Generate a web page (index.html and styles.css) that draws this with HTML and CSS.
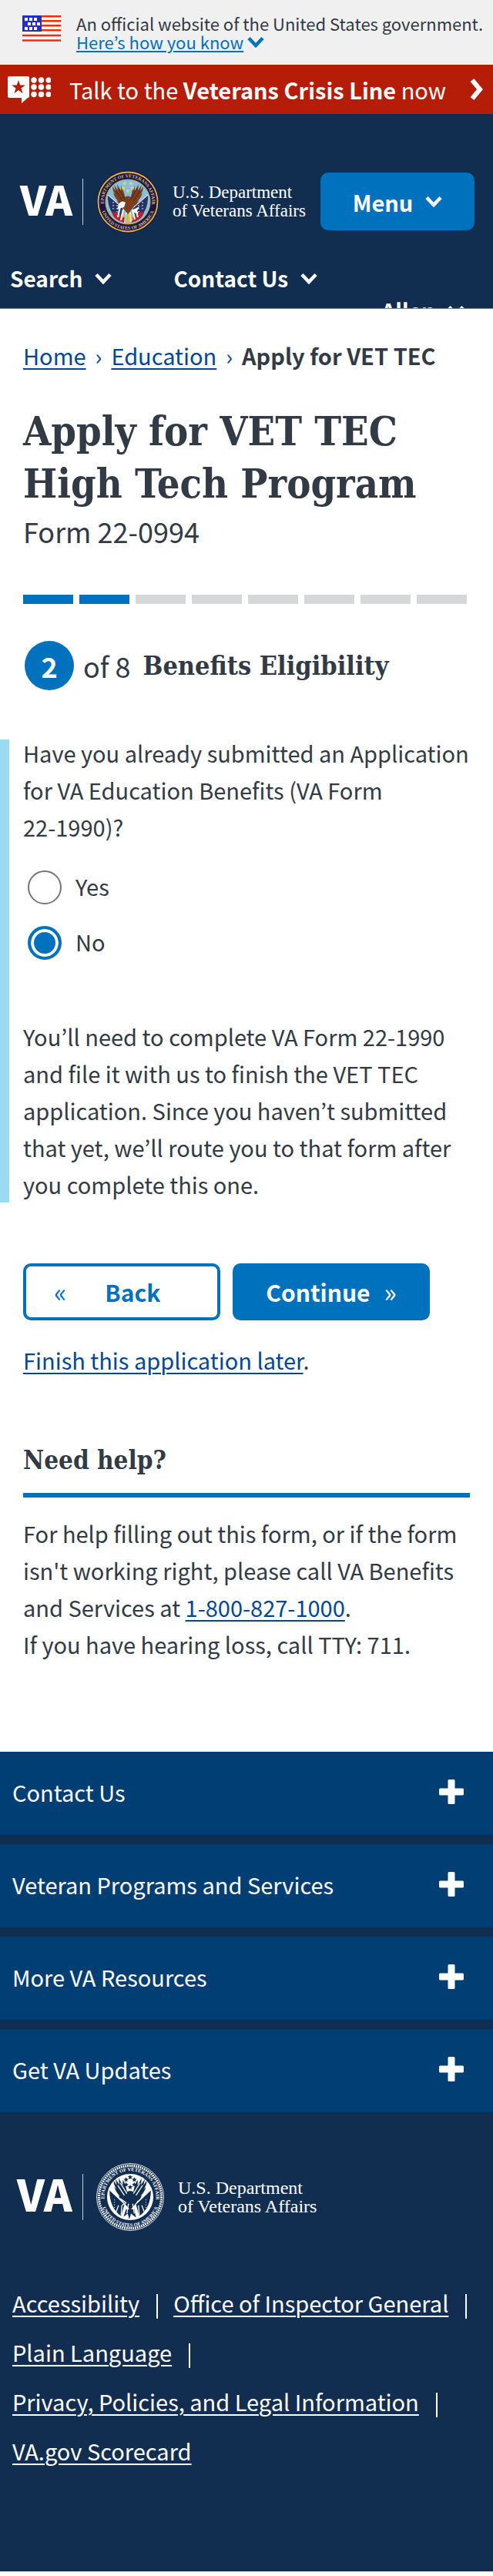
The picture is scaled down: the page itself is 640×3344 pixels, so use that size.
FILE: index.html
```html
<!DOCTYPE html>
<html lang="en">
<head>
<meta charset="utf-8">
<meta name="viewport" content="width=device-width, initial-scale=1">
<title>Apply for VET TEC | Veterans Affairs</title>
<link rel="stylesheet" href="styles.css">
</head>
<body>
<svg class="defs" width="0" height="0" aria-hidden="true">
  <defs>
    <symbol id="chevron" viewBox="0 0 22 15"><path d="M2 2.500l9 9.500 9-9.500" fill="none" stroke="currentColor" stroke-width="4.500"/></symbol>
    <symbol id="plus" viewBox="0 0 32 32"><path d="M13 0h6q1.500 0 1.500 1.500v10h10q1.500 0 1.500 1.500v6q0 1.500-1.500 1.500h-10v10q0 1.500-1.500 1.500h-6q-1.500 0-1.500-1.500v-10h-10q-1.500 0-1.500-1.500v-6q0-1.500 1.500-1.500h10v-10q0-1.500 1.500-1.500z" fill="currentColor"/></symbol>
    <path id="arc-top" d="M-31 4A31.300 31.300 0 1 1 31 4"/>
    <path id="arc-bottom" d="M-35.500 6A36 36 0 0 0 35.500 6"/>
    <path id="star" d="M0-3l.9 1.900 2 .2-1.500 1.400.4 2.100L0 1.600-1.800 2.600l.4-2.100L-2.900-.9l2-.2z"/>
    <path id="wing" d="M-3 7C-10 6-13 2-14-2l2 1c-4-3-6-7-7-11l3 3c-3-4-4-7-4-11l4 6-2-8 5 7-1-8 5 9 0-7c3 5 4 9 5 14z"/>
  </defs>
</svg>

<div class="gov-banner">
  <svg class="flag" viewBox="0 0 50 34" aria-hidden="true">
    <path fill="#fff" d="M0 0h50v34H0z"/>
    <path d="M0 1.200h50M0 7.200h50M0 13.200h50M0 19.200h50M0 26h50M0 32.500h50" stroke="#f22b08" stroke-width="2.600"/>
    <path fill="#2130bd" d="M0 0h25v21H0z"/>
    <path d="M3 5h18M7 11h18M3 17h18" stroke="#fff" stroke-width="4" stroke-dasharray="4 2"/>
  </svg>
  <div>
    <div>An official website of the United States government.</div>
    <button class="banner-link" type="button"><span>Here’s how you know</span><svg class="chev" aria-hidden="true"><use href="#chevron"/></svg></button>
  </div>
</div>

<a class="crisis" href="#crisis">
  <svg class="crisis-icon" viewBox="0 0 56 35" aria-hidden="true">
    <path fill="#fff" d="M2 0h24q2 0 2 2v24q0 2-2 2l-8 7v-7H2q-2 0-2-2V2q0-2 2-2z"/>
    <path fill="#b51d09" d="M14 5l2.200 6.500h6.800l-5.500 4 2.100 6.700L14 18.100l-5.600 4.100 2.100-6.700-5.500-4h6.800z"/>
    <g fill="#fff"><circle cx="34" cy="5" r="3.700"/><circle cx="43.500" cy="5" r="3.700"/><circle cx="53" cy="5" r="3.500"/><circle cx="34" cy="14" r="3.700"/><circle cx="43.500" cy="14" r="3.700"/><circle cx="53" cy="14" r="3.500"/><circle cx="34" cy="23.500" r="3.700"/><circle cx="43.500" cy="23.500" r="3.700"/><circle cx="53" cy="23.500" r="3.500"/></g>
  </svg>
  <span class="crisis-text">Talk to the <strong>Veterans Crisis Line</strong> now</span>
  <svg class="crisis-arrow" viewBox="0 0 18 28" aria-hidden="true"><path d="M3 2l10 12L3 26" fill="none" stroke="#fff" stroke-width="6"/></svg>
</a>

<header class="header">
  <div class="header-row">
    <a class="logo" href="#home">
      <span class="logo-va">VA</span>
      <span class="logo-rule"></span>
      <svg class="seal" viewBox="-41 -41 82 82" aria-hidden="true">
        <circle r="40.500" fill="#1d1748"/>
        <circle r="38.500" fill="none" stroke="#e5b53c" stroke-width="1.800"/>
        <circle r="29" fill="#84bfdc" stroke="#d9ae45"/>
        <g class="seal-text" fill="#d8bd78"><text><textPath href="#arc-top" startOffset="50%" text-anchor="middle">DEPARTMENT OF VETERANS AFFAIRS</textPath></text><text><textPath href="#arc-bottom" startOffset="50%" text-anchor="middle">UNITED STATES OF AMERICA</textPath></text></g>
        <path fill="#253466" d="M-26-9l20 17-5 16Q-27 13-26-9zM26-9L6 8l5 16Q27 13 26-9z"/>
        <path d="M-26-9l22 19M26-9L4 10" stroke="#d9dfe8" stroke-width="1.200"/>
        <path d="M-19 0v10M-14 4v11M19 0v10M14 4v11" stroke="#cbd4e6" stroke-dasharray="1.500 2.500" stroke-width="1.500"/>
        <path fill="#b52235" d="M-21 14q7-3 10 2 5 6 9 4l-3 7Q-18 24-21 14zM21 14q-7-3-10 2-5 6-9 4l3 7Q18 24 21 14z"/>
        <path d="M-10 6l-3 14M-6 10l-3 14M10 10l3 10M6 10l3 13M-2 14l-2 13M3 14l1 12" stroke="#f4efec" stroke-width="2.200"/>
        <g fill="#7c3f1d"><use href="#wing"/><use href="#wing" transform="scale(-1 1)"/><path d="M-6-5Q0-10 6-5l2 11-8 10-8-10z"/></g>
        <path d="M-16-15l9 14M-12-18l8 15M16-15L7-1M12-18L4-3" stroke="#4e2414"/>
        <path fill="#fff" d="M-12 3q4-6 9-2l-2 6-5 1-4 2zM7 10l8-4-3 6 2 3-7-1z"/>
        <path d="M-2 16l-2 10M1 16v11M4 16l2 8" stroke="#efbd27" stroke-width="2"/>
        <g fill="#f4d44c"><use href="#star" x="-4" y="-24"/><use href="#star" x="4" y="-24"/><use href="#star" x="-6" y="-18"/><use href="#star" x="6" y="-18"/><use href="#star" y="-14"/></g>
      </svg>
      <span class="logo-name">U.S. Department<br>of Veterans Affairs</span>
    </a>
    <button class="menu" type="button">Menu <svg class="chev" aria-hidden="true"><use href="#chevron"/></svg></button>
  </div>
  <nav class="tools" aria-label="Tools">
    <button class="tool" type="button">Search <svg class="chev" aria-hidden="true"><use href="#chevron"/></svg></button>
    <button class="tool" type="button">Contact Us <svg class="chev" aria-hidden="true"><use href="#chevron"/></svg></button>
    <button class="tool tool-user" type="button">Allen <svg class="chev" aria-hidden="true"><use href="#chevron"/></svg></button>
  </nav>
</header>

<main class="main">
  <nav class="crumbs" aria-label="Breadcrumb">
    <a href="#home">Home</a><span class="sep">›</span><a href="#education">Education</a><span class="sep">›</span><strong>Apply for VET TEC</strong>
  </nav>
  <h1>Apply for VET TEC High Tech Program</h1>
  <p class="form-no">Form 22-0994</p>
  <div class="progress" role="img" aria-label="Step 2 of 8">
    <span class="seg done"></span><span class="seg done"></span><span class="seg"></span><span class="seg"></span><span class="seg"></span><span class="seg"></span><span class="seg"></span><span class="seg"></span>
  </div>
  <div class="step">
    <span class="step-no">2</span><span class="step-of">of 8</span><h2>Benefits Eligibility</h2>
  </div>

  <form class="form">
    <fieldset class="question">
      <legend>Have you already submitted an Application for VA Education Benefits (VA Form <span class="keep">22-1990)?</span></legend>
      <div class="options">
        <div class="option"><input type="radio" name="applied" id="applied-yes"><label for="applied-yes">Yes</label></div>
        <div class="option"><input type="radio" name="applied" id="applied-no" checked><label for="applied-no">No</label></div>
      </div>
      <p class="note">You’ll need to complete VA Form <span class="keep">22-1990</span> and file it with us to finish the VET TEC application. Since you haven’t submitted that yet, we’ll route you to that form after you complete this one.</p>
    </fieldset>
    <div class="actions">
      <button class="btn back" type="button"><span class="angle">«</span><span class="back-label">Back</span></button>
      <button class="btn next" type="submit"><span>Continue</span><span class="angle">»</span></button>
    </div>
  </form>
  <p class="later"><a href="#later">Finish this application later</a>.</p>

  <section class="help">
    <h2>Need help?</h2>
    <p>For help filling out this form, or if the form isn't working right, please call VA Benefits and Services at <a href="tel:18008271000">1-800-827-1000</a>.<br>If you have hearing loss, call TTY: 711.</p>
  </section>
</main>

<footer class="footer">
  <div class="accordion">
    <button type="button">Contact Us<svg class="plus" aria-hidden="true"><use href="#plus"/></svg></button>
    <button type="button">Veteran Programs and Services<svg class="plus" aria-hidden="true"><use href="#plus"/></svg></button>
    <button type="button">More VA Resources<svg class="plus" aria-hidden="true"><use href="#plus"/></svg></button>
    <button type="button">Get VA Updates<svg class="plus" aria-hidden="true"><use href="#plus"/></svg></button>
  </div>
  <a class="logo logo-footer" href="#home">
    <span class="logo-va">VA</span>
    <span class="logo-rule"></span>
    <svg class="seal" viewBox="-41 -41 82 82" aria-hidden="true">
      <circle r="40.500" fill="none" stroke="#fff" stroke-width=".8"/>
      <circle r="37.800" fill="none" stroke="#fff" stroke-width="3" stroke-dasharray="1.600 1"/>
      <circle r="28" fill="#fff"/>
      <g class="seal-text" fill="#fff"><text><textPath href="#arc-top" startOffset="50%" text-anchor="middle">DEPARTMENT OF VETERANS AFFAIRS</textPath></text><text><textPath href="#arc-bottom" startOffset="50%" text-anchor="middle">UNITED STATES OF AMERICA</textPath></text></g>
      <g fill="#112e51"><path d="M-25-8l18 17-4 14Q-25 13-25-8zM25-8L7 9l4 14Q25 13 25-8z"/><use href="#wing"/><use href="#wing" transform="scale(-1 1)"/><path d="M-6-5Q0-10 6-5l2 11-8 10-8-10z"/><path d="M-5 15l-3 9 5-4 2 7 2-7 6 5-2-10z"/>
      <use href="#star" x="-5" y="-21"/><use href="#star" y="-24"/><use href="#star" x="5" y="-21"/><use href="#star" x="-5" y="-15"/><use href="#star" x="5" y="-15"/><use href="#star" y="-12"/></g>
      <path d="M-15-14l8 12M-12-17l8 13M15-14L7-2M12-17L4-4M-12 2l7 5-5 3M-14 10l-3 8M-10 10l-1 12M14 10l3 8M10 10l1 12M-2 8l-2 12M3 8l2 12" stroke="#fff" fill="none" stroke-width="1.200"/>
      <path d="M-19 3v10M19 3v10" stroke="#fff" stroke-dasharray="1 2"/>
    </svg>
    <span class="logo-name">U.S. Department<br>of Veterans Affairs</span>
  </a>
  <ul class="links">
    <li><a href="#accessibility">Accessibility</a></li>
    <li><a href="#oig">Office of Inspector General</a></li>
    <li><a href="#plain">Plain Language</a></li>
    <li><a href="#privacy">Privacy, Policies, and Legal Information</a></li>
    <li><a href="#scorecard">VA.gov Scorecard</a></li>
  </ul>
</footer>
</body>
</html>
```

FILE: styles.css
```css
* { box-sizing: border-box; }

body {
  margin: 0;
  padding-bottom: 6px;
  background: #fff;
  color: #323a45;
  font-family: "Noto Sans CJK KR", "Noto Sans", sans-serif;
  font-size: 29px;
  line-height: 48px;
}

button {
  border: 0;
  padding: 0;
  background: none;
  color: inherit;
  font: inherit;
  cursor: pointer;
}

h1, h2, p, ul, fieldset { margin: 0; padding: 0; }
h1, h2 { font-family: "DejaVu Serif Condensed", "DejaVu Serif", serif; font-weight: 700; }
a { color: #004795; text-decoration-thickness: 2px; text-underline-offset: 4px; }

.defs { position: absolute; }
.chev { width: 22px; height: 15px; flex: none; }
.keep { white-space: nowrap; }

/* Government banner */
.gov-banner {
  display: flex;
  gap: 20px;
  padding: 18px 8px 18px 29px;
  background: #f0f0f0;
  font-size: 22px;
  line-height: 24px;
}
.flag { width: 50px; height: 34px; margin-top: 2px; flex: none; }
.banner-link { display: flex; align-items: center; gap: 5px; color: #0071bc; }
.banner-link span { text-decoration: underline; text-decoration-thickness: 2px; text-underline-offset: 2px; }

/* Crisis line */
.crisis {
  display: flex;
  align-items: center;
  height: 64px;
  padding: 0 12px 0 10px;
  background: #b51d09;
  color: #fff;
  line-height: 40px;
  text-decoration: none;
}
.crisis-icon { width: 56px; height: 35px; flex: none; }
.crisis-text { flex: 1; margin-left: 24px; }
.crisis-arrow { width: 18px; height: 28px; flex: none; }

/* Header */
.header {
  padding-top: 76px;
  border-bottom: 1px solid #6f7f95;
  background: #112e51;
  color: #fff;
}
.header-row {
  display: flex;
  align-items: center;
  justify-content: space-between;
  padding: 0 24px 0 26px;
}
.logo { display: flex; align-items: center; color: #fff; text-decoration: none; }
.logo-va { width: 66px; padding-bottom: 10px; font-size: 53px; font-weight: 900; line-height: 60px; }
.logo-rule { width: 1px; height: 60px; margin: 0 17px 0 15px; background: #c5ccd6; }
.seal { width: 82px; height: 82px; margin: -4px 0; flex: none; }
.seal-text { font-family: "Liberation Serif", serif; font-size: 6px; font-weight: 700; }
.logo-name {
  margin-left: 17px;
  font-family: "Liberation Serif", serif;
  font-size: 23px;
  line-height: 24px;
  white-space: nowrap;
}
.menu {
  display: flex;
  align-items: center;
  justify-content: center;
  gap: 16px;
  width: 200px;
  height: 75px;
  border-radius: 10px;
  background: #0071bc;
  font-weight: 700;
}
.tools {
  display: flex;
  flex-wrap: wrap;
  column-gap: 80px;
  height: 60px;
  margin-top: 41px;
  padding: 0 37px 0 13px;
  overflow: hidden;
  font-size: 28px;
  line-height: 42px;
}
.tool { display: flex; align-items: center; gap: 16px; font-weight: 700; }
.tool-user { width: 100%; justify-content: flex-end; }

/* Page body */
.main { padding: 36px 30px 0; }
.sep { margin: 0 12px; color: #004795; }
h1 { margin-top: 41px; font-size: 52px; line-height: 68px; }
.form-no { margin-top: 3px; font-size: 36px; }
.progress {
  display: grid;
  grid-template-columns: repeat(8, 1fr);
  gap: 8px;
  margin-top: 59px;
  padding-right: 4px;
}
.seg { height: 12px; background: #d6d7d9; }
.done { background: #0071bc; }
.step { display: flex; align-items: center; margin: 48px 0 0 2px; font-size: 36px; }
.step-no {
  width: 64px;
  height: 64px;
  border-radius: 50%;
  background: #0071bc;
  color: #fff;
  font-weight: 700;
  line-height: 64px;
  text-align: center;
}
.step-of { margin: 0 16px 0 12px; }
h2 { font-size: 34px; line-height: 48px; }

.question {
  min-width: 0;
  margin: 64px -30px 0;
  padding: 0 30px 0 18px;
  border: 0;
  border-left: 12px solid #9bdaf1;
}
legend { float: left; width: 100%; margin-top: -7px; padding: 0; }
.options { display: grid; gap: 24px; clear: both; padding: 31px 0 0 6px; }
.option { display: flex; align-items: center; gap: 18px; }
.option input {
  appearance: none;
  width: 44px;
  height: 44px;
  margin: 0;
  border: 2px solid #757575;
  border-radius: 50%;
}
.option input:checked { border: 4px solid #0071bc; background: #0071bc; box-shadow: inset 0 0 0 4px #fff; }
.option label { padding-bottom: 4px; line-height: 44px; }
.note { margin-top: 73px; }

.actions { display: flex; gap: 16px; margin-top: 79px; }
.btn {
  display: flex;
  align-items: center;
  width: 256px;
  height: 74px;
  border-radius: 10px;
  font-size: 30px;
  font-weight: 700;
}
.back { padding-left: 36px; border: 4px solid #0071bc; color: #0071bc; }
.back-label { margin-left: 50px; }
.next { justify-content: center; gap: 18px; background: #0071bc; color: #fff; }
.angle { font-size: 34px; font-weight: 400; }
.later { margin-top: 27px; }
.help { margin-top: 83px; }
.help h2 { padding-bottom: 18px; border-bottom: 6px solid #0071bc; font-size: 33px; }
.help p { margin-top: 22px; }

/* Footer */
.footer { margin-top: 116px; padding-bottom: 125px; background: #112e51; color: #fff; }
.accordion { display: grid; gap: 12px; }
.accordion button {
  display: flex;
  align-items: center;
  justify-content: space-between;
  height: 108px;
  padding: 0 38px 4px 16px;
  background: #003e73;
}
.plus { width: 32px; height: 32px; flex: none; }
.logo-footer { margin-top: 70px; padding-left: 22px; }
.logo-footer .logo-va { width: 70px; font-size: 56px; }
.logo-footer .seal { width: 88px; height: 88px; }
.logo-footer .logo-name { margin-left: 18px; font-size: 24px; }
.links {
  display: flex;
  flex-wrap: wrap;
  margin-top: 65px;
  padding: 0 0 0 16px;
  line-height: 64px;
  list-style: none;
}
.links li { display: flex; align-items: center; }
.links li:not(:last-child)::after { content: ""; width: 2px; height: 32px; margin: 10px 20px 0 22px; background: #fff; }
.links a { color: #fff; }
```
